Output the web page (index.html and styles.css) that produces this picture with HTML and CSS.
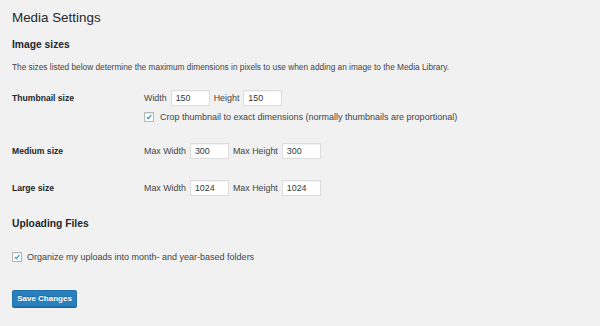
FILE: index.html
```html
<!DOCTYPE html>
<html>
<head>
<meta charset="utf-8">
<link rel="stylesheet" href="styles.css">
</head>
<body>
<div class="wrap">
  <h1 class="title">Media Settings</h1>
  <h2 class="section">Image sizes</h2>
  <p class="desc">The sizes listed below determine the maximum dimensions in pixels to use when adding an image to the Media Library.</p>

  <div class="row row-thumb">
    <div class="th">Thumbnail size</div>
    <div class="td">
      <span class="field"><span class="lbl">Width</span><span class="input">150</span></span>
      <span class="field"><span class="lbl">Height</span><span class="input">150</span></span>
    </div>
  </div>
  <div class="row row-crop">
    <div class="th"></div>
    <div class="td">
      <span class="check"><svg viewBox="0 0 10 10" width="10" height="10"><path d="M2.3 5.2 L4.2 7.1 L7.8 2.6" fill="none" stroke="#1e8cbe" stroke-width="1.3"/></svg></span>
      <span class="ctext">Crop thumbnail to exact dimensions (normally thumbnails are proportional)</span>
    </div>
  </div>
  <div class="row row-medium">
    <div class="th">Medium size</div>
    <div class="td">
      <span class="field"><span class="lbl">Max Width</span><span class="input">300</span></span>
      <span class="field"><span class="lbl">Max Height</span><span class="input">300</span></span>
    </div>
  </div>
  <div class="row row-large">
    <div class="th">Large size</div>
    <div class="td">
      <span class="field"><span class="lbl">Max Width</span><span class="input">1024</span></span>
      <span class="field"><span class="lbl">Max Height</span><span class="input">1024</span></span>
    </div>
  </div>

  <h2 class="section section-upload">Uploading Files</h2>
  <div class="row row-organize">
    <span class="check"><svg viewBox="0 0 10 10" width="10" height="10"><path d="M2.3 5.2 L4.2 7.1 L7.8 2.6" fill="none" stroke="#1e8cbe" stroke-width="1.3"/></svg></span>
    <span class="ctext">Organize my uploads into month- and year-based folders</span>
  </div>

  <div class="actions"><span class="button">Save Changes</span></div>
</div>
</body>
</html>
```

FILE: styles.css
```css
html, body {
  margin: 0;
  padding: 0;
  background: #f1f1f1;
}
body {
  font-family: "Liberation Sans", Arial, sans-serif;
  color: #444;
  width: 600px;
  height: 326px;
  overflow: hidden;
}
.wrap {
  padding: 9px 12px 0 12px;
}
.title {
  margin: 0;
  font-size: 13.4px;
  font-weight: 400;
  line-height: 18px;
  color: #23282d;
}
.section {
  margin: 11px 0 0 0;
  font-size: 10.3px;
  font-weight: 700;
  line-height: 14px;
  color: #23282d;
}
.desc {
  margin: 9px 0 0 0;
  font-size: 8.3px;
  line-height: 12px;
  color: #444;
}
.row {
  display: flex;
  align-items: center;
}
.th {
  width: 132px;
  flex: none;
  font-size: 8.6px;
  font-weight: 700;
  color: #23282d;
}
.td {
  display: flex;
  align-items: center;
  font-size: 8.9px;
}
.row-thumb { margin-top: 17px; height: 16px; }
.row-crop { margin-top: 5px; height: 12px; }
.row-medium { margin-top: 20px; height: 16px; }
.row-large { margin-top: 21px; height: 16px; }
.field {
  display: inline-flex;
  align-items: center;
  margin-right: 4px;
}
.lbl {
  margin-right: 4px;
  color: #444;
}
.input {
  box-sizing: border-box;
  width: 39px;
  height: 16px;
  background: #fff;
  border: 1px solid #ddd;
  box-shadow: inset 0 1px 1px rgba(0,0,0,0.05);
  padding-left: 4px;
  display: inline-flex;
  align-items: center;
  font-size: 8.9px;
  color: #32373c;
}
.check {
  box-sizing: border-box;
  width: 10px;
  height: 10px;
  border: 1px solid #b4b9be;
  background: #fff;
  box-shadow: inset 0 1px 1px rgba(0,0,0,0.1);
  display: inline-flex;
  align-items: center;
  justify-content: center;
  margin-right: 6px;
  flex: none;
}
.check svg { display: block; }
.ctext {
  font-size: 9px;
  color: #444;
}
.section-upload { margin-top: 21px; }
.row-organize { margin-top: 19px; height: 13px; }
.row-organize .check { margin-right: 5px; }
.actions { margin-top: 24px; }
.button {
  display: inline-flex;
  align-items: center;
  justify-content: center;
  box-sizing: border-box;
  width: 65px;
  height: 17px;
  background: #2a80bd;
  border: 1px solid #1f72aa;
  border-radius: 2px;
  box-shadow: 0 1px 0 #1b679b;
  color: #fff;
  font-size: 8px;
  font-weight: 700;
  text-shadow: 0 -1px 1px #1b679b;
}
```
